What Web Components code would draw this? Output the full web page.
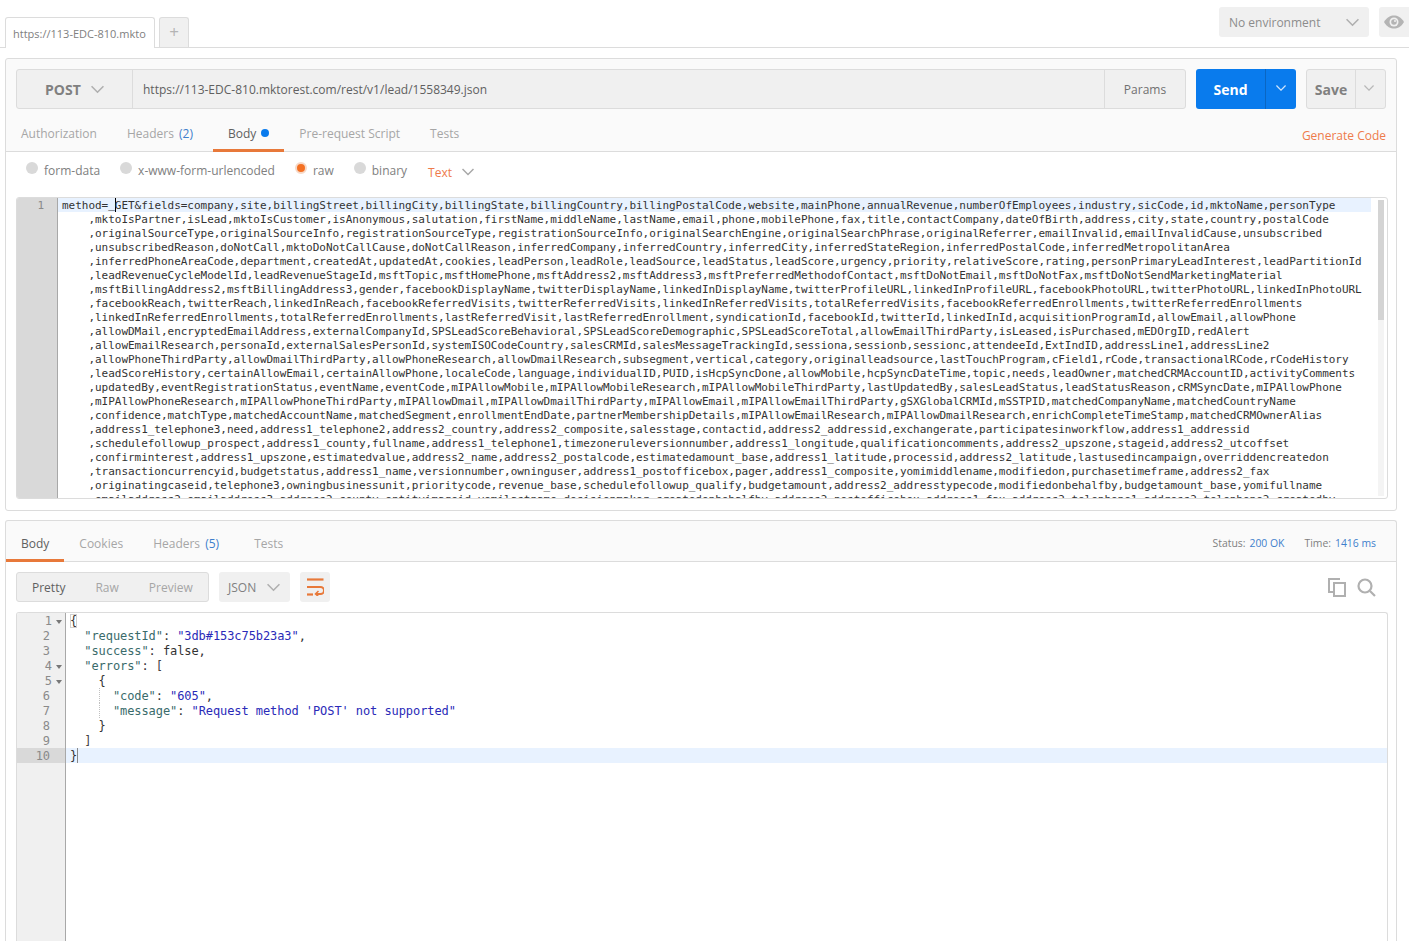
<!DOCTYPE html>
<html lang="en">
<head>
<meta charset="utf-8">
<title>Postman</title>
<style>
  html, body { margin: 0; height: 100%; overflow: hidden; background: #fff; }
  body { font-family: "Open Sans", "Liberation Sans", sans-serif; font-size: 12px; color: #808080; }
  .page { display: block; height: 941px; overflow: hidden; }
</style>
</head>
<body>
<div class="page">
  <pm-tabstrip title-text="https://113-EDC-810.mkto" env="No environment"></pm-tabstrip>

  <pm-pane kind="request">
    <pm-urlbar method="POST" url="https://113-EDC-810.mktorest.com/rest/v1/lead/1558349.json"></pm-urlbar>
    <pm-tabs height="43" pad="8">
      <pm-tab>Authorization</pm-tab>
      <pm-tab>Headers <b>(2)</b></pm-tab>
      <pm-tab active dot>Body</pm-tab>
      <pm-tab>Pre-request Script</pm-tab>
      <pm-tab>Tests</pm-tab>
      <pm-generate slot="right">Generate Code</pm-generate>
    </pm-tabs>
    <pm-body-modes></pm-body-modes>
    <pm-request-editor></pm-request-editor>
  </pm-pane>

  <pm-pane kind="response">
    <pm-tabs height="41" pad="6">
      <pm-tab active>Body</pm-tab>
      <pm-tab>Cookies</pm-tab>
      <pm-tab>Headers <b>(5)</b></pm-tab>
      <pm-tab>Tests</pm-tab>
      <pm-status slot="right"></pm-status>
    </pm-tabs>
    <pm-response-toolbar></pm-response-toolbar>
    <pm-json-view></pm-json-view>
  </pm-pane>
</div>

<script>
// Flecha de los desplegables, se reutiliza en todos los componentes
const chevron = (size, color, width = 1.5) => `
  <svg width="${size}" height="${size}" viewBox="0 0 12 12" fill="none" style="display:block">
    <polyline points="0.5,3 6,8.5 11.5,3" stroke="${color}" stroke-width="${width}"/>
  </svg>`;

class PmTabstrip extends HTMLElement {
  constructor() {
    super();
    this.attachShadow({ mode: "open" });
  }

  connectedCallback() {
    this.shadowRoot.innerHTML = `
      <style>
        :host { display: flex; height: 47px; border-bottom: 1px solid #dcdcdc; padding-left: 5px; align-items: flex-end; gap: 4px; font-size: 11px; color: #808080; }
        .tab { width: 150px; box-sizing: border-box; background: #fff; border: 1px solid #dcdcdc; border-bottom: 0; border-radius: 3px 3px 0 0; margin-bottom: -1px; height: 31px; padding: 0 8px 0 7px; display: flex; align-items: center; overflow: hidden; white-space: nowrap; }
        .plus { width: 30px; height: 30px; box-sizing: border-box; background: #f0f0f0; border: 1px solid #dcdcdc; border-bottom: 0; border-radius: 3px 3px 0 0; display: flex; align-items: center; justify-content: center; font-size: 17px; color: #b4b4b4; padding-bottom: 3px; }
        .right { margin-left: auto; align-self: flex-start; display: flex; gap: 10px; margin-top: 7px; }
        .env { width: 150px; height: 30px; box-sizing: border-box; background: #f0f0f0; border-radius: 3px; display: flex; align-items: center; justify-content: space-between; padding: 0 10px; font-size: 12px; color: #8c8c8c; }
        .eye { width: 30px; height: 30px; background: #f0f0f0; border-radius: 3px 0 0 3px; display: flex; align-items: center; justify-content: center; }
      </style>
      <div class="tab">${this.getAttribute("title-text")}</div>
      <div class="plus">+</div>
      <div class="right">
        <div class="env">${this.getAttribute("env")}${chevron(13, "#b0b0b0")}</div>
        <div class="eye">
          <svg width="20" height="14" viewBox="0 0 20 14">
            <path d="M0 7C3 2 6.500 .5 10 .5S17 2 20 7c-3 5-6.500 6.500-10 6.500S3 12 0 7z" fill="#b4b4b4"/>
            <circle cx="10" cy="7" r="4.500" fill="#f0f0f0"/>
            <circle cx="10" cy="7" r="2.800" fill="#b4b4b4"/>
            <circle cx="11" cy="6" r="1" fill="#f0f0f0"/>
          </svg>
        </div>
      </div>`;
  }
}

class PmPane extends HTMLElement {
  constructor() {
    super();
    this.attachShadow({ mode: "open" });
    this.shadowRoot.innerHTML = `
      <style>
        :host { display: block; box-sizing: border-box; width: 1392px; margin-left: 5px; border: 1px solid #dcdcdc; border-radius: 3px; background: #fff; }
        :host([kind="request"]) { margin-top: 10px; height: 453px; background: linear-gradient(#fafafa 93px, #fff 93px); }
        :host([kind="response"]) { margin-top: 9px; height: 440px; border-bottom: 0; border-radius: 3px 3px 0 0; background: linear-gradient(#fafafa 41px, #fff 41px); }
      </style>
      <slot></slot>`;
  }
}

class PmUrlbar extends HTMLElement {
  constructor() {
    super();
    this.attachShadow({ mode: "open" });
  }

  connectedCallback() {
    this.shadowRoot.innerHTML = `
      <style>
        :host { display: flex; padding: 10px 10px 0; height: 50px; box-sizing: border-box; font-size: 12px; }
        .group { display: flex; width: 1170px; height: 40px; box-sizing: border-box; background: #f0f0f0; border: 1px solid #dcdcdc; border-radius: 3px; }
        .method { width: 116px; box-sizing: border-box; border-right: 1px solid #dcdcdc; display: flex; align-items: center; padding-left: 28px; gap: 10px; font-weight: 700; font-size: 14px; color: #808080; }
        .url { flex: 1; display: flex; align-items: center; padding-left: 10px; color: #606060; }
        .params { width: 81px; box-sizing: border-box; border-left: 1px solid #dcdcdc; display: flex; align-items: center; justify-content: center; color: #707070; }
        .send { margin-left: 10px; width: 100px; height: 40px; background: #097bed; border-radius: 3px; display: flex; color: #fff; font-weight: 700; font-size: 14px; }
        .send span { width: 70px; display: flex; align-items: center; justify-content: center; border-right: 1px solid #0a66c2; box-sizing: border-box; }
        .send i { flex: 1; display: flex; align-items: center; justify-content: center; padding-bottom: 3px; }
        .save { margin-left: 10px; width: 80px; height: 40px; box-sizing: border-box; background: #f0f0f0; border: 1px solid #dcdcdc; border-radius: 3px; display: flex; color: #808080; font-weight: 700; font-size: 14px; }
        .save span { width: 49px; box-sizing: border-box; display: flex; align-items: center; justify-content: center; border-right: 1px solid #dcdcdc; }
        .save i { flex: 1; display: flex; align-items: center; justify-content: center; padding: 0 3px 3px 0; }
      </style>
      <div class="group">
        <div class="method">${this.getAttribute("method")}${chevron(13, "#b0b0b0")}</div>
        <div class="url">${this.getAttribute("url")}</div>
        <div class="params">Params</div>
      </div>
      <div class="send"><span>Send</span><i>${chevron(10, "#cfe4fb")}</i></div>
      <div class="save"><span>Save</span><i>${chevron(10, "#b8b8b8")}</i></div>`;
  }
}

class PmTabs extends HTMLElement {
  constructor() {
    super();
    this.attachShadow({ mode: "open" });
  }

  connectedCallback() {
    this.shadowRoot.innerHTML = `
      <style>
        :host { display: flex; box-sizing: border-box; height: ${this.getAttribute("height")}px; border-bottom: 1px solid #dcdcdc; --tab-pad: ${this.getAttribute("pad")}px; }
        .list { display: flex; margin-bottom: -1px; }
        .right { margin-left: auto; display: flex; }
      </style>
      <div class="list"><slot></slot></div>
      <div class="right"><slot name="right"></slot></div>`;
  }
}

class PmTab extends HTMLElement {
  constructor() {
    super();
    this.attachShadow({ mode: "open" });
  }

  connectedCallback() {
    const dot = this.hasAttribute("dot") ? `<i></i>` : "";
    this.shadowRoot.innerHTML = `
      <style>
        :host { display: flex; align-items: center; box-sizing: border-box; padding: var(--tab-pad) 15px 0; height: 100%; font-size: 12px; color: #a6a6a6; border-bottom: 3px solid transparent; white-space: pre; }
        :host([active]) { color: #606060; border-bottom-color: #e8793a; }
        ::slotted(b) { font-weight: 400; color: #3f7fcc; margin-left: 2px; margin-right: 5px; }
        i { width: 8px; height: 8px; border-radius: 50%; background: #097bed; margin-left: 5px; }
      </style>
      <slot></slot>${dot}`;
  }
}

class PmGenerate extends HTMLElement {
  constructor() {
    super();
    this.attachShadow({ mode: "open" });
    this.shadowRoot.innerHTML = `
      <style>
        :host { display: flex; align-items: center; padding: 10px 10px 0 0; font-size: 12px; color: #ee7b4b; }
      </style>
      <slot></slot>`;
  }
}

class PmStatus extends HTMLElement {
  constructor() {
    super();
    this.attachShadow({ mode: "open" });
    this.shadowRoot.innerHTML = `
      <style>
        :host { display: flex; align-items: center; padding: 3px 20px 0 0; font-size: 10.4px; color: #808080; white-space: pre; }
        b { font-weight: 400; color: #3f7fcc; margin-left: 4px; }
        span:first-child b { margin-left: 3px; }
        span + span { margin-left: 20px; }
      </style>
      <span>Status:<b>200 OK</b></span><span>Time:<b>1416 ms</b></span>`;
  }
}

class PmBodyModes extends HTMLElement {
  constructor() {
    super();
    this.attachShadow({ mode: "open" });
    const modes = [["form-data", 0], ["x-www-form-urlencoded", 0], ["raw", 1], ["binary", 0]];
    this.shadowRoot.innerHTML = `
      <style>
        :host { display: flex; height: 45px; box-sizing: border-box; padding: 10px 0 0 20px; font-size: 12px; color: #808080; }
        .mode { display: flex; margin-right: 20px; height: 20px; }
        .radio { width: 12px; height: 12px; border-radius: 50%; background: #d9d9d9; margin: 0 6px 0 0; }
        .radio.on { box-sizing: border-box; background: #f47023; border: 2px solid #f6d9c8; }
        .label { margin-top: 2px; line-height: 14px; }
        .type { display: flex; gap: 10px; color: #ee7b4b; align-items: center; height: 20px; margin-left: 1px; }
      </style>
      ${modes.map(([name, on]) => `
        <div class="mode"><div class="radio ${on ? "on" : ""}"></div><div class="label">${name}</div></div>`).join("")}
      <div class="type">Text ${chevron(12, "#a8a8a8")}</div>`;
  }
}

class PmRequestEditor extends HTMLElement {
  constructor() {
    super();
    this.attachShadow({ mode: "open" });
    const lines = [
      ",mktoIsPartner,isLead,mktoIsCustomer,isAnonymous,salutation,firstName,middleName,lastName,email,phone,mobilePhone,fax,title,contactCompany,dateOfBirth,address,city,state,country,postalCode",
      ",originalSourceType,originalSourceInfo,registrationSourceType,registrationSourceInfo,originalSearchEngine,originalSearchPhrase,originalReferrer,emailInvalid,emailInvalidCause,unsubscribed",
      ",unsubscribedReason,doNotCall,mktoDoNotCallCause,doNotCallReason,inferredCompany,inferredCountry,inferredCity,inferredStateRegion,inferredPostalCode,inferredMetropolitanArea",
      ",inferredPhoneAreaCode,department,createdAt,updatedAt,cookies,leadPerson,leadRole,leadSource,leadStatus,leadScore,urgency,priority,relativeScore,rating,personPrimaryLeadInterest,leadPartitionId",
      ",leadRevenueCycleModelId,leadRevenueStageId,msftTopic,msftHomePhone,msftAddress2,msftAddress3,msftPreferredMethodofContact,msftDoNotEmail,msftDoNotFax,msftDoNotSendMarketingMaterial",
      ",msftBillingAddress2,msftBillingAddress3,gender,facebookDisplayName,twitterDisplayName,linkedInDisplayName,twitterProfileURL,linkedInProfileURL,facebookPhotoURL,twitterPhotoURL,linkedInPhotoURL",
      ",facebookReach,twitterReach,linkedInReach,facebookReferredVisits,twitterReferredVisits,linkedInReferredVisits,totalReferredVisits,facebookReferredEnrollments,twitterReferredEnrollments",
      ",linkedInReferredEnrollments,totalReferredEnrollments,lastReferredVisit,lastReferredEnrollment,syndicationId,facebookId,twitterId,linkedInId,acquisitionProgramId,allowEmail,allowPhone",
      ",allowDMail,encryptedEmailAddress,externalCompanyId,SPSLeadScoreBehavioral,SPSLeadScoreDemographic,SPSLeadScoreTotal,allowEmailThirdParty,isLeased,isPurchased,mEDOrgID,redAlert",
      ",allowEmailResearch,personaId,externalSalesPersonId,systemISOCodeCountry,salesCRMId,salesMessageTrackingId,sessiona,sessionb,sessionc,attendeeId,ExtIndID,addressLine1,addressLine2",
      ",allowPhoneThirdParty,allowDmailThirdParty,allowPhoneResearch,allowDmailResearch,subsegment,vertical,category,originalleadsource,lastTouchProgram,cField1,rCode,transactionalRCode,rCodeHistory",
      ",leadScoreHistory,certainAllowEmail,certainAllowPhone,localeCode,language,individualID,PUID,isHcpSyncDone,allowMobile,hcpSyncDateTime,topic,needs,leadOwner,matchedCRMAccountID,activityComments",
      ",updatedBy,eventRegistrationStatus,eventName,eventCode,mIPAllowMobile,mIPAllowMobileResearch,mIPAllowMobileThirdParty,lastUpdatedBy,salesLeadStatus,leadStatusReason,cRMSyncDate,mIPAllowPhone",
      ",mIPAllowPhoneResearch,mIPAllowPhoneThirdParty,mIPAllowDmail,mIPAllowDmailThirdParty,mIPAllowEmail,mIPAllowEmailThirdParty,gSXGlobalCRMId,mSSTPID,matchedCompanyName,matchedCountryName",
      ",confidence,matchType,matchedAccountName,matchedSegment,enrollmentEndDate,partnerMembershipDetails,mIPAllowEmailResearch,mIPAllowDmailResearch,enrichCompleteTimeStamp,matchedCRMOwnerAlias",
      ",address1_telephone3,need,address1_telephone2,address2_country,address2_composite,salesstage,contactid,address2_addressid,exchangerate,participatesinworkflow,address1_addressid",
      ",schedulefollowup_prospect,address1_county,fullname,address1_telephone1,timezoneruleversionnumber,address1_longitude,qualificationcomments,address2_upszone,stageid,address2_utcoffset",
      ",confirminterest,address1_upszone,estimatedvalue,address2_name,address2_postalcode,estimatedamount_base,address1_latitude,processid,address2_latitude,lastusedincampaign,overriddencreatedon",
      ",transactioncurrencyid,budgetstatus,address1_name,versionnumber,owninguser,address1_postofficebox,pager,address1_composite,yomimiddlename,modifiedon,purchasetimeframe,address2_fax",
      ",originatingcaseid,telephone3,owningbusinessunit,prioritycode,revenue_base,schedulefollowup_qualify,budgetamount,address2_addresstypecode,modifiedonbehalfby,budgetamount_base,yomifullname",
      ",emailaddress2,emailaddress3,address2_county,entityimageid,yomilastname,decisionmaker,createdonbehalfby,address2_postofficebox,address1_fax,address2_telephone1,address2_telephone2,createdby"
    ];
    const first = `<div class="line active">method=<span class="under">_</span><span class="cursor"></span>GET&amp;fields=company,site,billingStreet,billingCity,billingState,billingCountry,billingPostalCode,website,mainPhone,annualRevenue,numberOfEmployees,industry,sicCode,id,mktoName,personType</div>`;
    // Sin espacios entre las filas: .code usa white-space: pre
    const code = first + lines.map((l) => `<div class="line">    ${l}</div>`).join("");
    this.shadowRoot.innerHTML = `
      <style>
        :host { display: flex; box-sizing: border-box; width: 1372px; height: 302px; margin-left: 10px; border: 1px solid #dcdcdc; border-radius: 3px; overflow: hidden; background: #fff;
          font-family: "DejaVu Sans Mono", "Liberation Mono", monospace; font-size: 11px; line-height: 16px; color: #333; }
        .gutter { width: 41px; box-sizing: border-box; background: #d9d9d9; border-right: 1px solid #a8a8a8; color: #8a8a8a; text-align: right; padding: 0 13px 0 0; flex: none; }
        .code { width: 1313px; flex: none; overflow: hidden; white-space: pre; letter-spacing: -0.025px; }
        .line { padding-left: 4px; height: 14px; }
        .line.active { background: #e8f2ff; }
        .under { color: #000; vertical-align: 1px; line-height: 0; }
        .cursor { display: inline-block; width: 0; height: 14px; border-left: 1px solid #000; vertical-align: top; margin-right: -1px; }
        .track { width: 6px; margin-left: 7px; flex: none; background: #f4f4f4; margin-top: 2px; margin-bottom: 2px; }
        .thumb { height: 120px; background: #d4d4d4; }
      </style>
      <div class="gutter">1</div>
      <div class="code">${code}</div>
      <div class="track"><div class="thumb"></div></div>`;
  }
}

class PmResponseToolbar extends HTMLElement {
  constructor() {
    super();
    this.attachShadow({ mode: "open" });
    this.shadowRoot.innerHTML = `
      <style>
        :host { display: flex; padding: 10px; height: 50px; box-sizing: border-box; font-size: 12px; color: #a6a6a6; }
        .group { display: flex; box-sizing: border-box; width: 193px; height: 30px; background: #f0f0f0; border: 1px solid #dcdcdc; border-radius: 3px; align-items: center; padding-left: 15px; }
        .group span:first-child { color: #606060; }
        .group span:nth-child(2), .group span:nth-child(3) { margin-left: 30px; }
        .json { margin-left: 10px; box-sizing: border-box; width: 71px; height: 30px; background: #f0f0f0; border-radius: 3px; display: flex; align-items: center; justify-content: space-between; padding: 0 10px 0 9px; color: #808080; }
        .wrap { margin-left: 10px; width: 30px; height: 30px; background: #f0f0f0; border-radius: 3px; display: flex; align-items: center; justify-content: center; }
        .tools { margin-left: auto; display: flex; gap: 11px; align-items: center; height: 30px; margin-right: 10px; }
      </style>
      <div class="group"><span>Pretty</span><span>Raw</span><span>Preview</span></div>
      <div class="json">JSON ${chevron(13, "#b0b0b0")}</div>
      <div class="wrap">
        <svg width="17" height="18" viewBox="0 0 17 18" fill="none" stroke="#e8793a">
          <path d="M0 1.500h16.500" stroke-width="2.200"/>
          <path d="M0 9h13.500a3.200 3.200 0 0 1 0 7H9" stroke-width="2"/>
          <path d="M0 16.500h6" stroke-width="2.200"/>
          <path d="M11.500 13l-3 3 3 2.500" stroke-width="1.500"/>
        </svg>
      </div>
      <div class="tools">
        <svg width="18" height="19" viewBox="0 0 18 19" fill="none" stroke="#b0b0b0" stroke-width="2">
          <path d="M12 1H1v13h4"/><rect x="6" y="5" width="11" height="13"/>
        </svg>
        <svg width="19" height="19" viewBox="0 0 19 19" fill="none" stroke="#b0b0b0" stroke-width="2.200">
          <circle cx="8" cy="8" r="6.500"/><path d="M13 13l5 5"/>
        </svg>
      </div>`;
  }
}

class PmJsonView extends HTMLElement {
  constructor() {
    super();
    this.attachShadow({ mode: "open" });
    const k = (s) => `<span class="key">${s}</span>`;
    const v = (s) => `<span class="str">${s}</span>`;
    const guide = `<span class="guide"></span>`;
    const rows = [
      [1, true, `<span class="match">{</span>`],
      [2, false, `  ${k('"requestId"')}: ${v('"3db#153c75b23a3"')},`],
      [3, false, `  ${k('"success"')}: false,`],
      [4, true, `  ${k('"errors"')}: <span class="br">[</span>`],
      [5, true, `    {`],
      [6, false, `    ${guide}  ${k('"code"')}: ${v('"605"')},`],
      [7, false, `    ${guide}  ${k('"message"')}: ${v(`"Request method 'POST' not supported"`)}`],
      [8, false, `    }`],
      [9, false, `  <span class="br">]</span>`],
      [10, false, `}<span class="cursor"></span>`]
    ];
    const code = rows.map(([n, , html]) => `<div class="row ${n === 10 ? "now" : ""}">${html}</div>`).join("");
    this.shadowRoot.innerHTML = `
      <style>
        :host { display: flex; box-sizing: border-box; width: 1372px; height: 340px; margin-left: 10px; border: 1px solid #dcdcdc; border-bottom: 0; border-radius: 3px 3px 0 0; overflow: hidden;
          font-family: "DejaVu Sans Mono", "Liberation Mono", monospace; font-size: 12px; line-height: 17px; color: #333; letter-spacing: -0.08px; }
        .gutter { width: 49px; box-sizing: border-box; background: #f0f0f0; border-right: 1px solid #a8a8a8; color: #8a8a8a; flex: none; }
        .num { height: 15px; box-sizing: border-box; display: flex; justify-content: flex-end; align-items: center; padding: 2px 15px 0 0; }
        .num.fold { padding-right: 3px; gap: 4px; }
        .num.fold::after { content: ""; border: 3px solid transparent; border-top: 4px solid #777; border-bottom: 0; }
        .num.now { background: #d9d9d9; }
        .code { flex: 1; white-space: pre; }
        .row { height: 15px; padding-left: 4px; }
        .row.now { background: #e8f2ff; }
        .key { color: #3a6b6b; }
        .str { color: #2a2ab8; }
        .br { color: #444; }
        .match { outline: 1px solid #d0d0d0; outline-offset: -1px; }
        .guide { display: inline-block; width: 0; height: 15px; border-left: 1px dotted #c0c0c0; vertical-align: top; margin-right: -1px; }
        .cursor { display: inline-block; width: 0; height: 15px; border-left: 1px solid #888; vertical-align: top; }
      </style>
      <div class="gutter">
        ${rows.map(([n, fold]) => `<div class="num ${fold ? "fold" : ""} ${n === 10 ? "now" : ""}">${n}</div>`).join("")}
      </div>
      <div class="code">${code}</div>`;
  }
}

customElements.define("pm-tabstrip", PmTabstrip);
customElements.define("pm-pane", PmPane);
customElements.define("pm-urlbar", PmUrlbar);
customElements.define("pm-tabs", PmTabs);
customElements.define("pm-tab", PmTab);
customElements.define("pm-generate", PmGenerate);
customElements.define("pm-status", PmStatus);
customElements.define("pm-body-modes", PmBodyModes);
customElements.define("pm-request-editor", PmRequestEditor);
customElements.define("pm-response-toolbar", PmResponseToolbar);
customElements.define("pm-json-view", PmJsonView);
</script>
</body>
</html>
